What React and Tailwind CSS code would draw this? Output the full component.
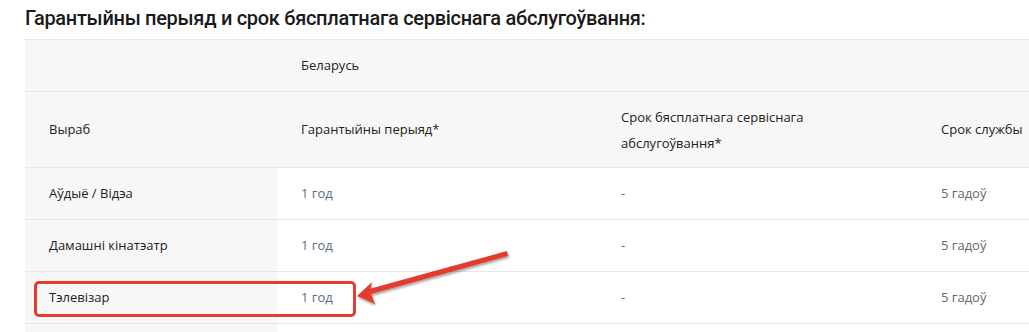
import React from "react";

const rows = [
  { name: "Аўдыё / Відэа", warranty: "1 год", service: "-", life: "5 гадоў" },
  { name: "Дамашні кінатэатр", warranty: "1 год", service: "-", life: "5 гадоў" },
  { name: "Тэлевізар", warranty: "1 год", service: "-", life: "5 гадоў" },
  { name: "", warranty: "", service: "", life: "" },
];

const grid = "grid grid-cols-[252px_320px_320px_1fr]";

export default function App() {
  return (
    <div
      className="relative w-[1029px] h-[332px] overflow-hidden bg-white text-[#222]"
      style={{ fontFamily: "'Open Sans', 'Noto Sans', sans-serif" }}
    >
      <h2
        className="pl-[25px] pt-[3px] h-[39px] text-[20px] font-medium tracking-[-0.3px] text-[#1a1a1a]"
        style={{ fontFamily: "'Roboto', 'Noto Sans', sans-serif" }}
      >
        Гарантыйны перыяд и срок бясплатнага сервіснага абслугоўвання:
      </h2>

      <div className="ml-[25px] w-[1100px] text-[13px] border-t border-[#e6e6e6]">
        {/* header */}
        <div className={`${grid} h-[52px] bg-[#f7f7f7] border-b border-[#e6e6e6]`}>
          <div />
          <div className="flex items-center pl-[24px]">Беларусь</div>
          <div />
          <div />
        </div>
        <div className={`${grid} h-[76px] bg-[#f7f7f7] border-b border-[#e6e6e6]`}>
          <div className="flex items-center pl-[24px]">Выраб</div>
          <div className="flex items-center pl-[24px]">Гарантыйны перыяд*</div>
          <div className="flex items-center pl-[24px] pr-[80px] leading-[26px]">
            Срок бясплатнага сервіснага абслугоўвання*
          </div>
          <div className="flex items-center pl-[24px]">Срок службы</div>
        </div>

        {/* body */}
        {rows.map((r, i) => (
          <div key={i} className={`${grid} h-[52px] border-b border-[#e6e6e6]`}>
            <div className="flex items-center pl-[24px] bg-[#f7f7f7]">{r.name}</div>
            <div className="flex items-center pl-[24px] text-[#5b6b7e]">{r.warranty}</div>
            <div className="flex items-center pl-[24px] text-[#666]">{r.service}</div>
            <div className="flex items-center pl-[24px] text-[#666]">{r.life}</div>
          </div>
        ))}
      </div>

      {/* highlight frame */}
      <div className="absolute left-[34px] top-[281px] w-[322px] h-[36px] border-[3px] border-[#e53a2f] rounded-[5px]" />

      {/* pointer arrow */}
      <svg className="absolute left-0 top-0" width="1029" height="332" viewBox="0 0 1029 332">
        <defs>
          <filter id="sh" x="-10%" y="-50%" width="120%" height="200%">
            <feDropShadow dx="1" dy="2" stdDeviation="1.2" floodColor="#000" floodOpacity="0.35" />
          </filter>
        </defs>
        <g filter="url(#sh)" fill="#e53a2f">
          <polygon points="507,251 508,256 371,294 369,289" />
          <polygon points="357,296 372,282 370,291 375,304" />
        </g>
      </svg>
    </div>
  );
}
